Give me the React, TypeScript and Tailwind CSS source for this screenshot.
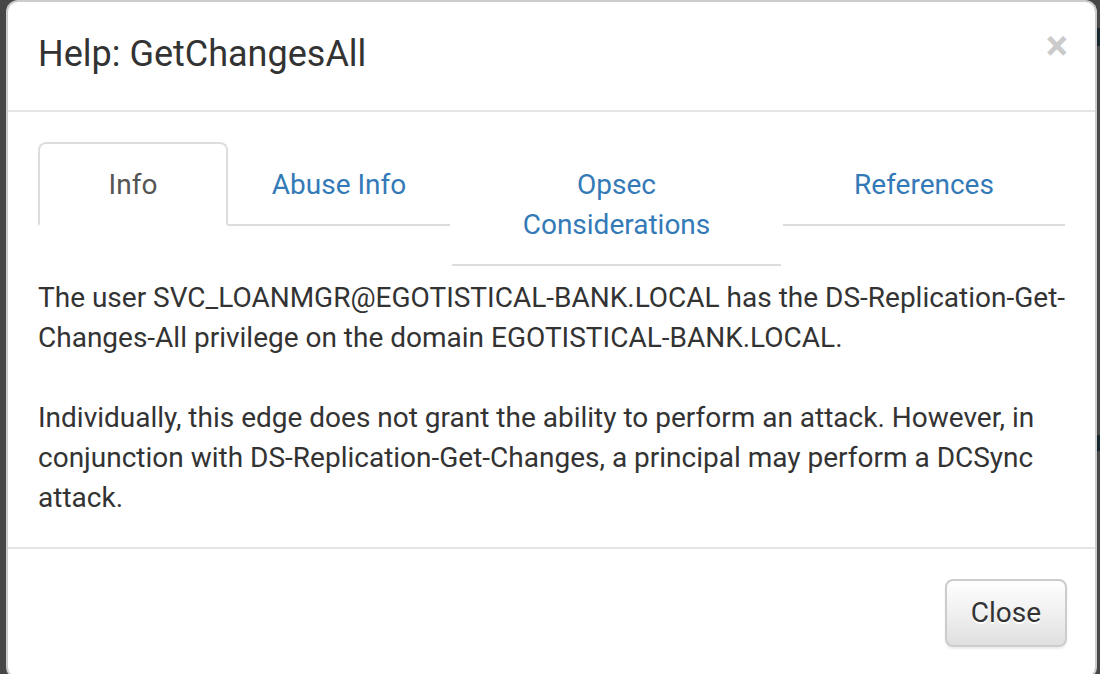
import React from 'react';

const tabs = [
    { key: 'info', label: ['Info'], width: 'w-[190px]', active: true },
    { key: 'abuse', label: ['Abuse Info'], width: 'w-[222px]', active: false },
    { key: 'opsec', label: ['Opsec', 'Considerations'], width: 'w-[329px] ml-[2px]', active: false },
    { key: 'refs', label: ['References'], width: 'w-[282px] ml-[2px]', active: false },
];

function Tab({ label, width, active }: { label: string[]; width: string; active: boolean }) {
    if (active) {
        return (
            <div className={`${width} border-2 border-[#ddd] border-b-transparent rounded-t-[8px] px-[28px] pt-[21px] pb-[19px] text-center leading-[40px] text-[#555]`}>
                {label.map((l) => <div key={l}>{l}</div>)}
            </div>
        );
    }
    return (
        <div className={`${width} border-b-2 border-[#ddd] px-[30px] pt-[23px] pb-[19px] text-center leading-[40px] text-[#337ab7]`}>
            {label.map((l) => <div key={l}>{l}</div>)}
        </div>
    );
}

export default function App() {
    return (
        <div className="w-[1100px] h-[674px] overflow-hidden bg-[#474747] flex font-[Roboto,sans-serif]">
            <div className="w-[6px] shrink-0" />
            <div className="w-[1091px] h-[679px] shrink-0 bg-white border-2 border-black/20 rounded-[12px] flex flex-col">
                {/* header */}
                <div className="flex items-start justify-between px-[30px] pt-[27px] pb-[30px] border-b-2 border-[#e5e5e5]">
                    <h4 className="text-[36px] leading-[51px] text-[#333]">Help: GetChangesAll</h4>
                    <button className="mt-[-4px] mr-[-3px] text-[42px] leading-[42px] font-bold text-black opacity-20">×</button>
                </div>

                {/* body */}
                <div className="px-[30px] pt-[30px] pb-[29px] text-[28px] leading-[40px] text-[#333]">
                    <div className="flex items-start">
                        {tabs.map((t) => (
                            <Tab key={t.key} label={t.label} width={t.width} active={t.active} />
                        ))}
                    </div>
                    <div className="mt-[12px] whitespace-nowrap">
                        <div>The user SVC_LOANMGR@EGOTISTICAL-BANK.LOCAL has the DS-Replication-Get-</div>
                        <div>Changes-All privilege on the domain EGOTISTICAL-BANK.LOCAL.</div>
                        <div className="h-[40px]" />
                        <div>Individually, this edge does not grant the ability to perform an attack. However, in</div>
                        <div>conjunction with DS-Replication-Get-Changes, a principal may perform a DCSync</div>
                        <div>attack.</div>
                    </div>
                </div>

                {/* footer */}
                <div className="flex justify-end px-[30px] pt-[30px] pb-[30px] border-t-2 border-[#e5e5e5]">
                    <button className="mr-[-2px] px-[24px] py-[12px] text-[28px] leading-[40px] text-[#333] border-2 border-[#ccc] rounded-[8px] bg-linear-to-b from-white to-[#e0e0e0] shadow-[0_2px_2px_rgba(0,0,0,0.075)] [text-shadow:0_2px_0_#fff]">
                        Close
                    </button>
                </div>
            </div>
            <div className="w-[3px] shrink-0 flex flex-col">
                <div className="h-[28px]" />
                <div className="h-[18px] bg-[#16262c]" />
                <div className="h-[389px]" />
                <div className="h-[16px] bg-[#16262c]" />
                <div className="flex-1" />
            </div>
        </div>
    );
}
